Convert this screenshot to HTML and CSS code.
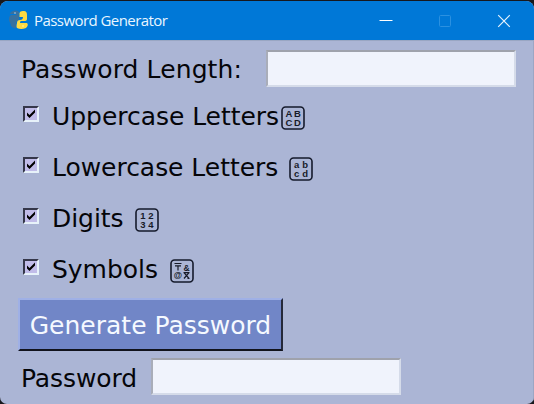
FILE: index.html
```html
<!DOCTYPE html>
<html lang="en">
<head>
<meta charset="utf-8">
<title>Password Generator</title>
<link rel="stylesheet" href="styles.css">
</head>
<body>
<div class="window">
  <header class="titlebar">
    <svg class="logo" width="20" height="20" viewBox="0 0 20 20">
      <path fill="#38719f" d="M3 1.5Q7-.5 10 2V7Q10 9 7 9H5V14Q5 15 3 14Q0 13 0 9Q0 6 2 5H7V4H1Q1 2 3 1.5Z"/>
      <path fill="#38719f" d="M1 11Q3 8 7 8.5Q10 8 10 6V9Q10 11 8 11.5Q7 12 7 14V18Q5 19 2 16Z"/>
      <path fill="#ffda43" d="M10.5 3Q11 .5 15 1Q18 1 18 5V9Q18 11 15 11H12Q11 11 11 13H18Q20 15 17 18Q12 20 8 18Q7 17 8 13Q8 10 11 10Q14 10 14 7H10.5Z"/>
      <circle cx="6" cy="3" r=".8" fill="#b9d7ed"/><circle cx="14" cy="16" r=".8" fill="#fff6be"/>
    </svg>
    <h1 class="title">Password Generator</h1>
    <div class="controls">
      <svg width="14" height="14" viewBox="0 0 14 14"><path d="M.5 6.5H13.5" stroke="#fff"/></svg>
      <svg width="14" height="14" viewBox="0 0 14 14"><rect x="1.5" y="1.5" width="11" height="11" rx="1" fill="none" stroke="#2b91e1"/></svg>
      <svg width="14" height="14" viewBox="0 0 14 14"><path d="M1.2 1.2L12.8 12.8M12.8 1.2L1.2 12.8" stroke="#e3f1fc" stroke-width="1.2"/></svg>
    </div>
  </header>
  <main class="content">
    <div class="field length"><label for="len">Password Length:</label><input id="len" class="entry"></div>
    <div class="option"><span class="check"><svg width="12" height="12" viewBox="0 0 12 12"><path d="M2 4.5L4.5 7L10 1.5V4.5L4.5 10L2 7.5Z"/></svg></span><span class="name">Uppercase Letters</span><svg class="symbol upper" width="26" height="26" viewBox="0 0 26 26"><rect x="2" y="2" width="22" height="22" rx="3.5"/><text x="8.9" y="12.4">A</text><text x="17.4" y="12.4">B</text><text x="8.9" y="21.2">C</text><text x="17.4" y="21.2">D</text></svg></div>
    <div class="option"><span class="check"><svg width="12" height="12" viewBox="0 0 12 12"><path d="M2 4.5L4.5 7L10 1.5V4.5L4.5 10L2 7.5Z"/></svg></span><span class="name">Lowercase Letters</span><svg class="symbol lower" width="26" height="26" viewBox="0 0 26 26"><rect x="2" y="2" width="22" height="22" rx="3.5"/><text x="8.7" y="12.2">a</text><text x="17.2" y="12.2">b</text><text x="8.7" y="21">c</text><text x="17.2" y="21">d</text></svg></div>
    <div class="option"><span class="check"><svg width="12" height="12" viewBox="0 0 12 12"><path d="M2 4.5L4.5 7L10 1.5V4.5L4.5 10L2 7.5Z"/></svg></span><span class="name">Digits</span><svg class="symbol digits" width="26" height="26" viewBox="0 0 26 26"><rect x="2" y="2" width="22" height="22" rx="3.5"/><text x="9" y="12.2">1</text><text x="17" y="12.2">2</text><text x="9" y="21">3</text><text x="17" y="21">4</text></svg></div>
    <div class="option"><span class="check"><svg width="12" height="12" viewBox="0 0 12 12"><path d="M2 4.5L4.5 7L10 1.5V4.5L4.5 10L2 7.5Z"/></svg></span><span class="name">Symbols</span><svg class="symbol signs" width="26" height="26" viewBox="0 0 26 26"><rect x="2" y="2" width="22" height="22" rx="3.5"/><path d="M5.5 5.5H12.5M6 7.8H12M9 7.8V12.5M14.5 14.7H20.5M18.5 20.5H20.5M20 14.7L15 20.5M15 14.7L20 20.5"/><text x="17.5" y="12.5">&amp;</text><text x="9" y="20.2">@</text></svg></div>
    <button class="generate">Generate Password</button>
    <div class="field result"><label for="pw">Password</label><input id="pw" class="entry"></div>
  </main>
</div>
</body>
</html>
```
FILE: styles.css
```css
* { box-sizing: border-box; }
body { margin: 0; background: #17181d; overflow: hidden; }
.window {
  height: 403px;
  margin-top: 1px;
  border-radius: 8px 8px 7px 7px;
  overflow: hidden;
  background: #abb5d5;
  font: 25px/30px "DejaVu Sans", sans-serif;
  color: #050509;
}
.titlebar {
  height: 39px;
  display: flex;
  align-items: center;
  padding: 0 23px 0 9px;
  background: #0078d7;
}
.logo { margin-top: -1px; }
.title {
  margin: -2px 0 0 5px;
  font: 400 15px/20px "Open Sans", sans-serif;
  letter-spacing: -0.56px;
  color: #e9f6ff;
}
.controls { display: flex; gap: 45px; margin-left: auto; }
.controls svg { display: block; }
.content {
  height: 364px;
  padding: 9px 17px 0 18px;
  border: 1px solid #9ca6c4;
  border-top-color: #99a6c3;
  border-width: 1px 1px 0 0;
}
.field { display: flex; align-items: center; height: 37px; padding-left: 3px; white-space: nowrap; }
.field label { padding-top: 2px; }
.length { width: 498px; justify-content: space-between; }
.length label { letter-spacing: 0.1px; }
.entry {
  width: 250px;
  height: 37px;
  padding: 0 6px;
  border: 2px solid;
  border-color: #9fa2ac #d5dbe9 #d5dbe9 #a9adb9;
  border-radius: 0;
  background: #f0f3fc;
  font: inherit;
  outline: none;
}
.option { display: flex; align-items: center; height: 51px; padding-left: 5px; white-space: nowrap; }
.length + .option { margin-top: 4px; }
.name { letter-spacing: -0.04px; }
.check {
  width: 16px;
  height: 16px;
  margin: -6px 13px 0 0;
  border: 2px solid;
  border-color: #35374a #e7f2fa #e7f2fa #35374a;
  background: #c1bce9;
}
.check svg { display: block; }
.symbol {
  fill: #171b29;
  font: bold 9.5px "Liberation Sans", sans-serif;
  text-anchor: middle;
  margin-top: 2px;
}
.symbol rect { fill: none; stroke: #151a2b; stroke-width: 1.6; }
.symbol path { fill: none; stroke: #171b29; stroke-width: 1.2; }
.upper { margin-left: 1px; }
.lower { margin-left: 10px; }
.digits { margin-left: 10px; }
.signs { margin-left: 11px; }
.signs text { font-size: 8.5px; }
.generate {
  display: block;
  width: 265px;
  height: 53px;
  margin-top: 3px;
  padding: 3px 0 0;
  border: 2px solid;
  border-color: #9fb0e6 #25293a #11131c #9fb0e6;
  border-radius: 0;
  background: #7186c7;
  color: #f5f9ff;
  font: inherit;
}
.result { margin-top: 7px; gap: 14px; }
.result label { padding-top: 4px; letter-spacing: -0.1px; }
```
